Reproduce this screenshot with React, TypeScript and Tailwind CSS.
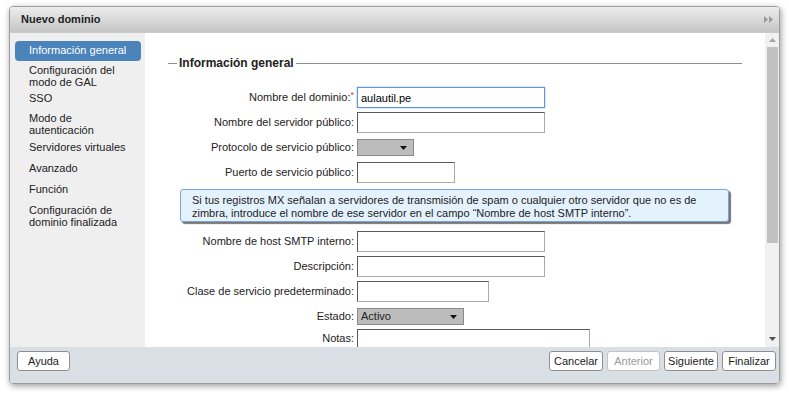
import type { ReactNode } from 'react';

const font = "font-['Liberation_Sans',Arial,sans-serif]";

const navItems = [
  { label: ['Información general'], h: 'h-[20px]', active: true },
  { label: ['Configuración del', 'modo de GAL'], h: 'h-[28px]' },
  { label: ['SSO'], h: 'h-[20px]' },
  { label: ['Modo de', 'autenticación'], h: 'h-[29px]' },
  { label: ['Servidores virtuales'], h: 'h-[21px]' },
  { label: ['Avanzado'], h: 'h-[21px]' },
  { label: ['Función'], h: 'h-[21px]' },
  { label: ['Configuración de', 'dominio finalizada'], h: 'h-[28px]' },
];

function Row({ label, required, children }: { label: string; required?: boolean; children: ReactNode }) {
  return (
    <div className="flex h-[25px] items-center">
      <div className="w-[212px] shrink-0 pr-[3px] text-right whitespace-nowrap">
        {label}
        {required && <span className="relative -top-[3px] text-[9px] text-[#d32f2f]">*</span>}
      </div>
      {children}
    </div>
  );
}

function TextBox({ w, value, focus }: { w: string; value?: string; focus?: boolean }) {
  const border = focus
    ? 'border border-[#5f93db] shadow-[0_0_2px_#8fb6ec]'
    : 'border border-t-[#5a5a5a] border-l-[#5a5a5a] border-r-[#aaaaaa] border-b-[#aaaaaa]';
  return (
    <input
      readOnly
      value={value ?? ''}
      className={`h-[21px] ${w} ${border} bg-white px-[3px] text-[11px] text-black outline-none ${font}`}
    />
  );
}

function Select({ w, value }: { w: string; value?: string }) {
  return (
    <div className={`flex h-[17px] ${w} items-center justify-between border border-[#8a8a8a] bg-[#bcbcbc] pl-[3px] pr-[6px]`}>
      <span>{value}</span>
      <svg width="7" height="4" viewBox="0 0 7 4">
        <path d="M0 0H7L3.5 4Z" fill="#111" />
      </svg>
    </div>
  );
}

function Btn({ w, children, disabled }: { w: string; children: ReactNode; disabled?: boolean }) {
  return (
    <button
      className={`h-[20px] ${w} rounded-[3px] border bg-white text-[11px] ${
        disabled ? 'border-[#c4c4c4] text-[#9a9a9a]' : 'border-[#8f8f8f] text-[#222]'
      } ${font}`}
    >
      {children}
    </button>
  );
}

export default function App() {
  return (
    <div className={`h-[396px] w-[789px] bg-white pl-[9px] pt-[6px] text-[11px] text-[#222] ${font}`}>
      <div className="flex h-[378px] w-[771px] flex-col overflow-hidden rounded-[4px] border border-[#9c9c9c] shadow-[1px_2px_6px_rgba(0,0,0,0.4)]">
        {/* barra de título */}
        <div className="flex h-[25px] shrink-0 items-center justify-between bg-linear-to-b from-[#ededed] to-[#c5c5c5] pl-[11px] pr-[6px]">
          <span className="text-[11px] font-bold text-[#222]">Nuevo dominio</span>
          <svg width="9" height="7" viewBox="0 0 9 7">
            <path d="M0 0L4 3.5L0 7Z M5 0L9 3.5L5 7Z" fill="#9a9a9a" />
          </svg>
        </div>

        {/* cuerpo */}
        <div className="flex h-[315px] shrink-0">
          {/* menú lateral */}
          <div className="w-[135px] shrink-0 border-t border-[#c9c9c9] bg-[#efefef] pl-[5px] pr-[4px] pt-[8px]">
            {navItems.map((item) => (
              <div
                key={item.label.join(' ')}
                className={`${item.h} pl-[14px] pt-[3px] leading-[12px] whitespace-nowrap ${
                  item.active ? 'rounded-[4px] bg-[#4a84bb] text-white' : 'text-[#222]'
                }`}
              >
                {item.label.map((l) => (
                  <div key={l}>{l}</div>
                ))}
              </div>
            ))}
          </div>

          {/* contenido */}
          <div className="flex-1 overflow-hidden border-t border-[#c9c9c9] bg-white">
            <div className="ml-[23px] mt-[23px] flex h-[14px] w-[574px] items-center">
              <div className="h-px w-[9px] bg-[#8e8e8e]" />
              <span className="px-[2px] text-[12px] font-bold text-[#222]">Información general</span>
              <div className="h-px flex-1 bg-[#8e8e8e]" />
            </div>

            <div className="mt-[15px]">
              <Row label="Nombre del dominio:" required>
                <TextBox w="w-[188px]" value="aulautil.pe" focus />
              </Row>
              <Row label="Nombre del servidor público:">
                <TextBox w="w-[188px]" />
              </Row>
              <Row label="Protocolo de servicio público:">
                <Select w="w-[57px]" />
              </Row>
              <Row label="Puerto de servicio público:">
                <TextBox w="w-[98px]" />
              </Row>

              <div className="mb-[7px] ml-[35px] mt-[4px] h-[33px] w-[549px] rounded-[3px] border border-[#7aa3df] bg-[#e4f2fe] px-[11px] pt-[4px] leading-[13px] whitespace-nowrap shadow-[2px_2px_1px_rgba(60,60,60,0.7)]">
                Si tus registros MX señalan a servidores de transmisión de spam o cualquier otro servidor que no es de
                <br />
                zimbra, introduce el nombre de ese servidor en el campo “Nombre de host SMTP interno”.
              </div>

              <Row label="Nombre de host SMTP interno:">
                <TextBox w="w-[188px]" />
              </Row>
              <Row label="Descripción:">
                <TextBox w="w-[188px]" />
              </Row>
              <Row label="Clase de servicio predeterminado:">
                <TextBox w="w-[132px]" />
              </Row>
              <Row label="Estado:">
                <Select w="w-[107px]" value="Activo" />
              </Row>
              <div className="flex items-start">
                <div className="w-[212px] shrink-0 pr-[3px] pt-[1px] text-right">Notas:</div>
                <div className="h-[40px] w-[233px] border border-t-[#5a5a5a] border-l-[#5a5a5a] border-r-[#aaaaaa] border-b-[#aaaaaa]" />
              </div>
            </div>
          </div>

          {/* barra de desplazamiento */}
          <div className="flex w-[14px] shrink-0 flex-col border-t border-[#c9c9c9] bg-[#f1f1f1]">
            <div className="flex h-[14px] items-center justify-center">
              <svg width="7" height="4" viewBox="0 0 7 4">
                <path d="M0 4H7L3.5 0Z" fill="#a3a3a3" />
              </svg>
            </div>
            <div className="ml-[2px] h-[196px] w-[11px] bg-[#c1c1c1]" />
            <div className="flex-1" />
            <div className="flex h-[16px] items-center justify-center">
              <svg width="7" height="4" viewBox="0 0 7 4">
                <path d="M0 0H7L3.5 4Z" fill="#505050" />
              </svg>
            </div>
          </div>
        </div>

        {/* pie */}
        <div className="flex flex-1 items-start justify-between bg-[#dadee5] pl-[7px] pr-[3px] pt-[4px]">
          <Btn w="w-[53px]">Ayuda</Btn>
          <div className="flex gap-[4px]">
            <Btn w="w-[54px]">Cancelar</Btn>
            <Btn w="w-[53px]" disabled>
              Anterior
            </Btn>
            <Btn w="w-[54px]">Siguiente</Btn>
            <Btn w="w-[54px]">Finalizar</Btn>
          </div>
        </div>
      </div>
    </div>
  );
}
